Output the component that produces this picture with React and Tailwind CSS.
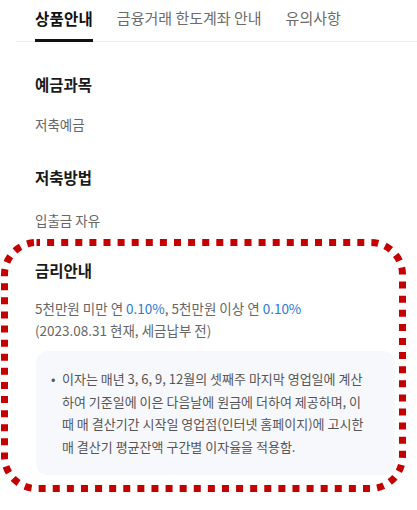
import React from "react";

export default function App() {
  return (
    <div className="relative w-[417px] h-[510px] bg-white overflow-hidden font-['Noto_Sans_CJK_KR','Noto_Sans',sans-serif]">
      {/* Tabs */}
      <div className="flex gap-6 ml-4 pl-[19px] border-b border-[#ececec]">
        <div className="pt-[7px] pb-[10px] -mb-px border-b-[3px] border-[#111] text-[15.5px] leading-[22px] font-bold text-[#111] tracking-[0.2px]">
          상품안내
        </div>
        <div className="pt-[7px] pb-[10px] -mb-px border-b-[3px] border-transparent text-[15px] leading-[22px] text-[#6b6b6b]">
          금융거래 한도계좌 안내
        </div>
        <div className="pt-[7px] pb-[10px] -mb-px border-b-[3px] border-transparent text-[15px] leading-[22px] text-[#6b6b6b]">
          유의사항
        </div>
      </div>

      {/* Content */}
      <div className="pl-[35px] pr-[22px] flex flex-col">
        <div className="mt-[31px] text-[15.5px] leading-[22px] font-bold text-[#1a1a1a]">
          예금과목
        </div>
        <div className="mt-[18px] text-[13.5px] leading-[22px] text-[#666]">
          저축예금
        </div>

        <div className="mt-[31px] text-[15.5px] leading-[22px] font-bold text-[#1a1a1a]">
          저축방법
        </div>
        <div className="mt-[21px] text-[13.5px] leading-[22px] text-[#666]">
          입출금 자유
        </div>

        <div className="mt-[28px] text-[15.5px] leading-[22px] font-bold text-[#1a1a1a]">
          금리안내
        </div>
        <div className="mt-[16px] text-[13.5px] leading-[22px] text-[#666]">
          <div>
            5천만원 미만 연 <span className="text-[#2a7ad0]">0.10%</span>, 5천만원
            이상 연 <span className="text-[#2a7ad0]">0.10%</span>
          </div>
          <div>(2023.08.31 현재, 세금납부 전)</div>
        </div>

        <div className="mt-[10px] ml-px rounded-[12px] bg-[#f7f8fc] pl-[15px] pr-[14px] py-[17px] flex text-[13px] leading-[22.5px] text-[#555]">
          <span className="w-[11px] shrink-0">•</span>
          <div className="whitespace-nowrap">
            이자는 매년 3, 6, 9, 12월의 셋째주 마지막 영업일에 계산
            <br />
            하여 기준일에 이은 다음날에 원금에 더하여 제공하며, 이
            <br />
            때 매 결산기간 시작일 영업점(인터넷 홈페이지)에 고시한
            <br />
            매 결산기 평균잔액 구간별 이자율을 적용함.
          </div>
        </div>
      </div>

      {/* Red dotted annotation frame */}
      <svg
        className="absolute left-0 top-0 pointer-events-none"
        width="417"
        height="510"
        viewBox="0 0 417 510"
      >
        <rect
          x="4.5"
          y="242.5"
          width="398"
          height="246"
          rx="32"
          ry="32"
          fill="none"
          stroke="#c40000"
          strokeWidth="7"
          strokeDasharray="7 7.1"
          strokeDashoffset="3.5"
        />
      </svg>
    </div>
  );
}
